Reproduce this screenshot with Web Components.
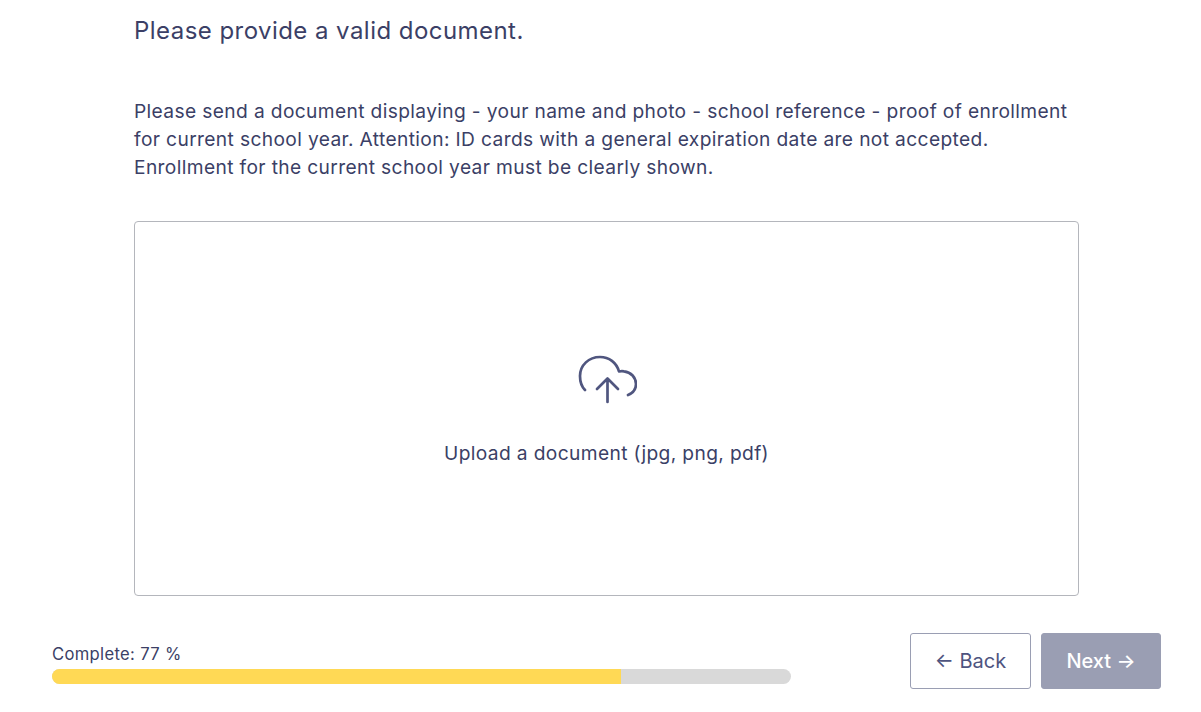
<!DOCTYPE html>
<html><head><meta charset="utf-8"><style>
html,body{margin:0;background:#fff;height:712px;overflow:hidden}
body{font-family:Inter,sans-serif;color:#3b3f66}
</style></head><body>
<doc-page>
<h-title slot="title">Please provide a valid document.</h-title>
<span slot="desc">Please send a document displaying - your name and photo - school reference - proof of enrollment for current school year. Attention: ID cards with a general expiration date are not accepted. Enrollment for the current school year must be clearly shown.</span>
<upload-box slot="upload">Upload a document (jpg, png, pdf)</upload-box>
<progress-meter slot="progress" value="77"></progress-meter>
<nav-button slot="back">← Back</nav-button>
<nav-button slot="next" primary>Next →</nav-button>
</doc-page>
<script>
const def=(name,html)=>customElements.define(name,class extends HTMLElement{
  constructor(){super();this.attachShadow({mode:'open'}).innerHTML=typeof html==='function'?html(this):html}
});
def('doc-page',`<style>
:host{display:flex;flex-direction:column;height:712px;box-sizing:border-box}
.main{box-sizing:border-box;width:945px;margin-left:134px;padding-top:16px}
.d{margin-top:52px;font-size:19.2px;line-height:28px;letter-spacing:.36px}
.u{margin-top:40px}
.f{display:flex;align-items:flex-start;margin-top:37px;padding:0 40px 0 52px;gap:10px}
.p{flex:0 0 739px;margin-right:109px;padding-top:11px}
</style>
<div class="main"><slot name="title"></slot><div class="d"><slot name="desc"></slot></div><div class="u"><slot name="upload"></slot></div></div>
<div class="f"><div class="p"><slot name="progress"></slot></div><slot name="back"></slot><slot name="next"></slot></div>`);
def('h-title',`<style>:host{display:block;font-size:24px;line-height:29px;letter-spacing:.45px}</style><slot></slot>`);
def('upload-box',`<style>:host{display:flex;flex-direction:column;align-items:center;box-sizing:border-box;height:375px;border:1px solid #b4b6bc;border-radius:4px;padding-top:132px;font-size:19.2px;line-height:28px;letter-spacing:.36px}
svg{display:block;margin-bottom:35px}</style>
<svg width="60" height="50" viewBox="0 0 60 50" fill="none" stroke="#50567f" stroke-width="2.7" stroke-linecap="round" stroke-linejoin="round"><path d="M8 36C4.500 32.500 3 27.500 3 22 3 11 12 3 23 3 32 3 39.500 8.500 42 17.500 44 17 45 17 47 17.300 54 18 59 23.500 59 30 59 35 56 39 51 41"/><path d="M30.500 48V24.500M20 35 30.500 24.500 41 35"/></svg><span><slot></slot></span>`);
def('progress-meter',e=>`<style>:host{display:block;font-size:16.6px;line-height:20px;letter-spacing:.02em}
.t{height:15px;margin-top:5px;background:#d9d9d9;border-radius:8px;overflow:hidden}
.b{height:100%;width:77%;background:#ffd955}</style><div>Complete: ${e.getAttribute('value')} %</div><div class="t"><div class="b"></div></div>`);
def('nav-button',`<style>:host{display:flex;align-items:center;justify-content:center;box-sizing:border-box;width:121px;height:56px;border:1px solid #9a9eb3;border-radius:3px;background:#fff;color:#4e5480;font-size:20px}
:host([primary]){width:120px;background:#9a9eb3;color:#fff;font-weight:500}</style><slot></slot>`);
</script>
</body></html>
